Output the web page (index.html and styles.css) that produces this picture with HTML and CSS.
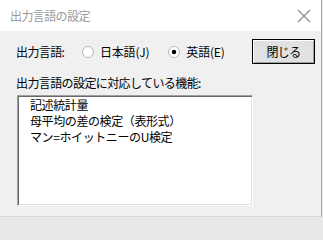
FILE: index.html
```html
<!DOCTYPE html>
<html lang="ja">
<head>
<meta charset="utf-8">
<link rel="stylesheet" href="styles.css">
</head>
<body>
<div class="window">
  <div class="titlebar">
    <span class="title">出力言語の設定</span>
    <svg class="close" width="14" height="14" viewBox="0 0 14 14"><path d="M1 1L13 13M13 1L1 13" stroke="#8a8a8a" stroke-width="1.2" fill="none"/></svg>
  </div>
  <div class="content">
    <div class="row">
      <span class="label">出力言語:</span>
      <span class="radio"><svg width="12" height="12" viewBox="0 0 12 12"><circle cx="6" cy="6" r="5.5" fill="#fff" stroke="#b8b8b8"/></svg></span>
      <span class="opt">日本語(J)</span>
      <span class="radio second"><svg width="12" height="12" viewBox="0 0 12 12"><circle cx="6" cy="6" r="5.5" fill="#fff" stroke="#b8b8b8"/><circle cx="6" cy="6" r="2.2" fill="#000"/></svg></span>
      <span class="opt">英語(E)</span>
      <button class="btn">閉じる</button>
    </div>
    <div class="label2">出力言語の設定に対応している機能:</div>
    <div class="listbox">
      <div class="item">記述統計量</div>
      <div class="item">母平均の差の検定（表形式）</div>
      <div class="item">マン=ホイットニーのU検定</div>
    </div>
  </div>
</div>
</body>
</html>
```
FILE: styles.css
```css
html, body {
  margin: 0;
  padding: 0;
  background: #e8e8e8;
}
body {
  width: 323px;
  height: 218px;
  overflow: hidden;
  font-family: "Noto Sans CJK JP", "Noto Sans", sans-serif;
  font-size: 12px;
  letter-spacing: -0.6px;
  color: #000;
}
.window {
  width: 321px;
  height: 216px;
  background: #f0f0f0;
  border-right: 1px solid #a8a8a8;
  border-bottom: 1px solid #d8d8d8;
}
.titlebar {
  height: 31px;
  background: #fff;
  display: flex;
  align-items: center;
  padding-left: 10px;
  padding-right: 10px;
}
.title {
  color: #9a9a9a;
  flex: 1;
  line-height: 14px;
}
.close {
  display: block;
}
.content {
  padding: 8px 6px 0 16px;
}
.row {
  display: flex;
  align-items: center;
  height: 25px;
  line-height: 14px;
}
.label {
  width: 66px;
}
.radio {
  display: flex;
  width: 12px;
  height: 12px;
  margin-right: 6px;
}
.radio.second {
  margin-left: 19px;
}
.opt {
  letter-spacing: -0.2px;
}
.btn {
  margin-left: auto;
  width: 63px;
  height: 25px;
  padding: 0;
  font-family: inherit;
  font-size: 12px;
  letter-spacing: -0.6px;
  line-height: 14px;
  background: #e1e1e1;
  border: 1px solid #000;
  box-shadow: inset 1px 1px 0 #fff, inset -1px -1px 0 #a0a0a0;
  color: #000;
}
.label2 {
  margin-top: 11px;
  line-height: 16px;
  letter-spacing: -0.6px;
}
.listbox {
  margin-top: 4px;
  margin-left: 1px;
  width: 222px;
  height: 108px;
  background: #fff;
  border-top: 1px solid #a0a0a0;
  border-left: 1px solid #a0a0a0;
  border-right: 1px solid #fff;
  border-bottom: 1px solid #fff;
  box-shadow: inset 1px 1px 0 #696969, inset -1px -1px 0 #e3e3e3;
  padding: 1px 0 0 12px;
  box-sizing: content-box;
}
.item {
  line-height: 16px;
  letter-spacing: -0.4px;
}
```
